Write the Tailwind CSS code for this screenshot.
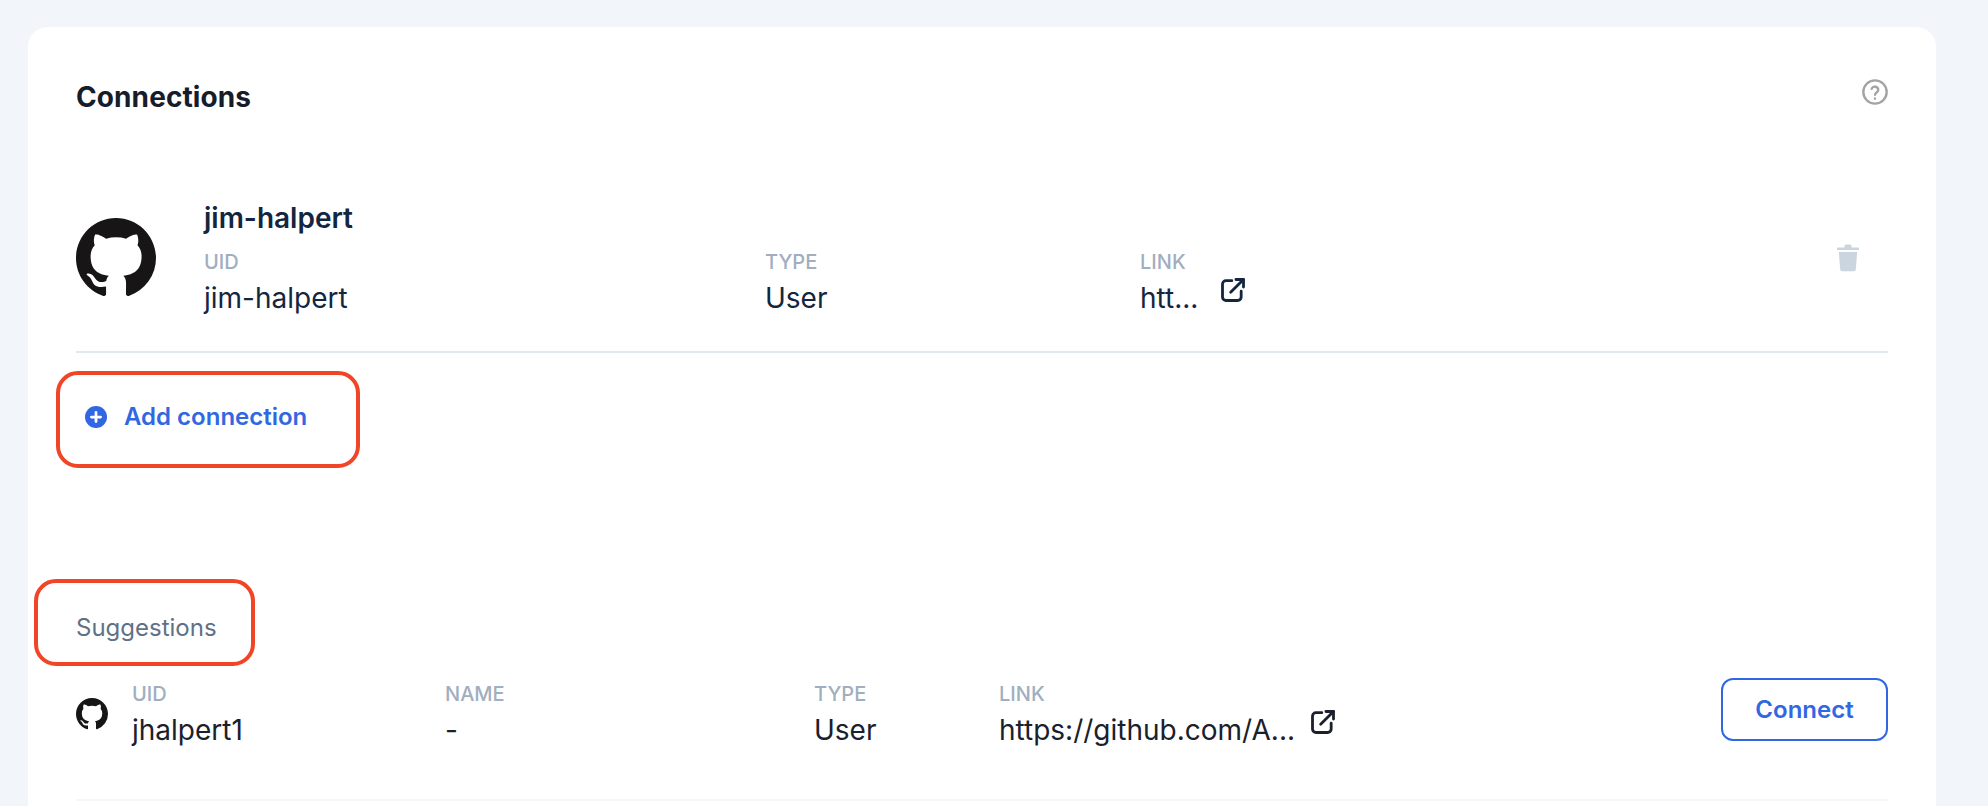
<!DOCTYPE html>
<html>
<head>
<meta charset="UTF-8">
<title>Connections</title>
<script src="https://cdn.jsdelivr.net/npm/@tailwindcss/browser@4"></script>
</head>
<body class="bg-[#f2f5fa] font-['Inter',sans-serif]">
<div class="h-[806px] overflow-hidden pt-[27px] pl-[28px] pr-[52px]">
  <div class="relative h-[779px] rounded-t-[20px] bg-white px-[48px]">

    <!-- header -->
    <div class="flex h-[120px] items-start justify-between pt-[53px]">
      <h1 class="text-[28px] leading-[34px] font-bold tracking-[0.1px] text-[#171c2b]">Connections</h1>
      <svg class="mt-[-2px] mr-[-1px] h-[28px] w-[28px] text-[#a3a3a3]" viewBox="0 0 24 24" fill="none" stroke="currentColor" stroke-width="2" stroke-linecap="round" stroke-linejoin="round"><circle cx="12" cy="12" r="10"/><path d="M9.2 9.3a2.9 2.9 0 0 1 5.6 1c0 1.9-2.8 2.5-2.8 4"/><path d="M12 17.600v.1"/></svg>
    </div>

    <!-- existing connection -->
    <div class="flex h-[206px] border-b-2 border-[#e2e8f0] pt-[53px]">
      <svg class="mt-[18px] h-[80px] w-[80px] shrink-0 text-[#171515]" viewBox="0 0 16 16" fill="currentColor"><path d="M8 0C3.58 0 0 3.58 0 8c0 3.54 2.29 6.53 5.47 7.59.4.07.55-.17.55-.38 0-.19-.01-.82-.01-1.49-2.01.37-2.53-.49-2.69-.94-.09-.23-.48-.94-.82-1.13-.28-.15-.68-.52-.01-.53.63-.01 1.08.58 1.23.82.72 1.21 1.87.87 2.33.66.07-.52.28-.87.51-1.07-1.78-.2-3.64-.89-3.64-3.95 0-.87.31-1.59.82-2.15-.08-.2-.36-1.02.08-2.12 0 0 .67-.21 2.2.82.64-.18 1.32-.27 2-.27s1.36.09 2 .27c1.53-1.04 2.2-.82 2.2-.82.44 1.1.16 1.92.08 2.12.51.56.82 1.27.82 2.15 0 3.07-1.87 3.75-3.65 3.95.29.25.54.73.54 1.48 0 1.07-.01 1.93-.01 2.2 0 .21.15.46.55.38A8.01 8.01 0 0 0 16 8c0-4.42-3.58-8-8-8z"/></svg>
      <div class="ml-[48px] flex-1">
        <div class="text-[28px] leading-[36px] font-semibold text-[#12263f]">jim-halpert</div>
        <div class="mt-[14px] flex">
          <div class="w-[561px]">
            <div class="text-[20px] leading-[24px] font-medium text-[#a0aec0]">UID</div>
            <div class="mt-[6px] text-[28px] leading-[36px] text-[#12263f]">jim-halpert</div>
          </div>
          <div class="w-[375px]">
            <div class="text-[20px] leading-[24px] font-medium text-[#a0aec0]">TYPE</div>
            <div class="mt-[6px] text-[28px] leading-[36px] text-[#12263f]">User</div>
          </div>
          <div>
            <div class="text-[20px] leading-[24px] font-medium text-[#a0aec0]">LINK</div>
            <div class="mt-[6px] flex items-start gap-[21px] text-[28px] leading-[36px] text-[#12263f]">htt...
              <svg class="mt-[-4px] h-[28px] w-[28px]" viewBox="0 0 24 24" fill="none" stroke="currentColor" stroke-width="2.4" stroke-linecap="round" stroke-linejoin="round"><path d="M11 4H6a3 3 0 0 0-3 3v11a3 3 0 0 0 3 3h10a3 3 0 0 0 3-3v-5"/><path d="M10 14 21 3"/><path d="M14.500 3H21v6.500"/></svg>
            </div>
          </div>
        </div>
      </div>
      <svg class="mt-[44px] mr-[28px] h-[28px] w-[24px] text-[#cbd5e0]" viewBox="0 0 24 28" fill="currentColor"><path d="M8.500 2a1.500 1.500 0 0 1 1.500-1.500h4A1.500 1.500 0 0 1 15.500 2v1.500H22a1 1 0 0 1 1 1V6H1V4.500a1 1 0 0 1 1-1h6.500z"/><path d="M2.800 8h18.400l-1.400 17.500a2 2 0 0 1-2 1.800H6.200a2 2 0 0 1-2-1.800z"/></svg>
    </div>

    <!-- add connection -->
    <div class="flex h-[128px] items-start pt-[48px] pl-[9px]">
      <svg class="mt-[5px] h-[22px] w-[22px] text-[#3267e3]" viewBox="0 0 24 24"><circle cx="12" cy="12" r="12" fill="currentColor"/><path d="M12 7v10M7 12h10" stroke="#fff" stroke-width="3" stroke-linecap="round"/></svg>
      <span class="ml-[17px] text-[24px] leading-[32px] font-semibold text-[#3267e3]">Add connection</span>
    </div>

    <!-- suggestions -->
    <div class="pt-[131px] text-[24px] leading-[32px] text-[#5f7186]">Suggestions</div>

    <div class="mt-[38px] flex h-[119px] items-start border-b-2 border-[#f5f6f8]">
      <svg class="mt-[16px] h-[32px] w-[32px] shrink-0 text-[#171515]" viewBox="0 0 16 16" fill="currentColor"><path d="M8 0C3.58 0 0 3.58 0 8c0 3.54 2.29 6.53 5.47 7.59.4.07.55-.17.55-.38 0-.19-.01-.82-.01-1.49-2.01.37-2.53-.49-2.69-.94-.09-.23-.48-.94-.82-1.13-.28-.15-.68-.52-.01-.53.63-.01 1.08.58 1.23.82.72 1.21 1.87.87 2.33.66.07-.52.28-.87.51-1.07-1.78-.2-3.64-.89-3.64-3.95 0-.87.31-1.59.82-2.15-.08-.2-.36-1.02.08-2.12 0 0 .67-.21 2.2.82.64-.18 1.32-.27 2-.27s1.36.09 2 .27c1.53-1.04 2.2-.82 2.2-.82.44 1.1.16 1.92.08 2.12.51.56.82 1.27.82 2.15 0 3.07-1.87 3.75-3.65 3.95.29.25.54.73.54 1.48 0 1.07-.01 1.93-.01 2.2 0 .21.15.46.55.38A8.01 8.01 0 0 0 16 8c0-4.42-3.58-8-8-8z"/></svg>
      <div class="ml-[24px] w-[313px]">
        <div class="text-[20px] leading-[24px] font-medium text-[#a0aec0]">UID</div>
        <div class="mt-[6px] text-[28px] leading-[36px] text-[#1a202c]">jhalpert1</div>
      </div>
      <div class="w-[369px]">
        <div class="text-[20px] leading-[24px] font-medium text-[#a0aec0]">NAME</div>
        <div class="mt-[6px] text-[28px] leading-[36px] text-[#1a202c]">-</div>
      </div>
      <div class="w-[185px]">
        <div class="text-[20px] leading-[24px] font-medium text-[#a0aec0]">TYPE</div>
        <div class="mt-[6px] text-[28px] leading-[36px] text-[#1a202c]">User</div>
      </div>
      <div class="flex-1">
        <div class="text-[20px] leading-[24px] font-medium text-[#a0aec0]">LINK</div>
        <div class="mt-[6px] flex items-start gap-[14px] text-[28px] leading-[36px] text-[#1a202c]">https://github.com/A...
          <svg class="mt-[-4px] h-[28px] w-[28px]" viewBox="0 0 24 24" fill="none" stroke="currentColor" stroke-width="2.4" stroke-linecap="round" stroke-linejoin="round"><path d="M11 4H6a3 3 0 0 0-3 3v11a3 3 0 0 0 3 3h10a3 3 0 0 0 3-3v-5"/><path d="M10 14 21 3"/><path d="M14.500 3H21v6.500"/></svg>
        </div>
      </div>
      <button class="mt-[-4px] h-[63px] w-[167px] rounded-[12px] border-2 border-[#3267e3] bg-white text-[24px] font-semibold text-[#3267e3]">Connect</button>
    </div>

    <!-- annotation boxes drawn over the screenshot -->
    <div class="absolute top-[344px] left-[28px] h-[97px] w-[304px] rounded-[22px] border-4 border-[#f04527]"></div>
    <div class="absolute top-[552px] left-[6px] h-[87px] w-[221px] rounded-[22px] border-4 border-[#f04527]"></div>
  </div>
</div>
</body>
</html>
